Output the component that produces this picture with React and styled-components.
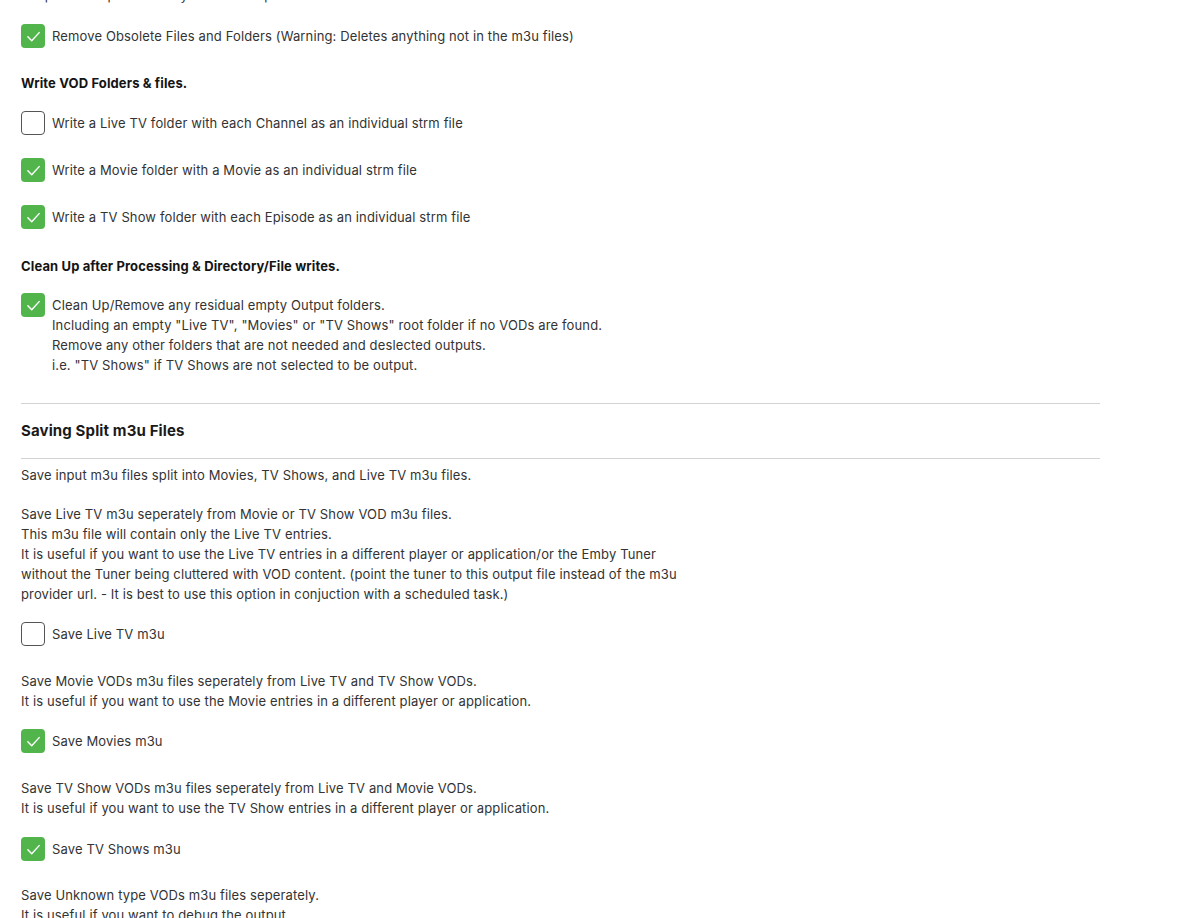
import React from "react";
import styled, { createGlobalStyle } from "styled-components";

const Global = createGlobalStyle`
  html, body {
    margin: 0;
    padding: 0;
    background: #ffffff;
    overflow: hidden;
  }
  body {
    font-family: Inter, "Noto Sans", sans-serif;
    color: #333333;
  }
`;

const Page = styled.div`
  width: 1079px;
  padding-left: 21px;
  margin-top: -15px;
  font-size: 13px;
  line-height: 20px;
  letter-spacing: 0.13px;
`;

const Text = styled.div`
  margin-bottom: ${(p) => p.$mb ?? 19}px;
`;

const Heading = styled.div`
  font-weight: 700;
  color: #141414;
  margin-bottom: ${(p) => p.$mb ?? 18}px;
`;

const Title = styled.h2`
  margin: 0;
  font-size: 15px;
  line-height: 22px;
  font-weight: 700;
  color: #1a1a1a;
`;

const Divider = styled.hr`
  border: none;
  border-top: 1.5px solid #d3d3d3;
  margin: 0;
  margin-top: ${(p) => p.$mt ?? 0}px;
  margin-bottom: ${(p) => p.$mb ?? 0}px;
`;

const Row = styled.label`
  display: flex;
  align-items: flex-start;
  gap: 7px;
  margin-bottom: ${(p) => p.$mb ?? 23}px;
`;

const Box = styled.span`
  flex: none;
  box-sizing: border-box;
  width: 24px;
  height: 24px;
  border-radius: 4px;
  display: flex;
  align-items: center;
  justify-content: center;
  background: ${(p) => (p.$checked ? "#52b54b" : "#ffffff")};
  border: ${(p) => (p.$checked ? "none" : "1.6px solid #555555")};
`;

const Label = styled.span`
  margin-top: 2px;
  color: #333333;
`;

const Check = ({ checked, children, mb }) => (
  <Row $mb={mb}>
    <Box $checked={checked}>
      {checked && (
        <svg width="17" height="17" viewBox="0 0 24 24" fill="none" stroke="#ffffff" strokeWidth="2" strokeLinecap="round" strokeLinejoin="round">
          <polyline points="4 12.5 9.5 18 20 6.5" />
        </svg>
      )}
    </Box>
    <Label>{children}</Label>
  </Row>
);

export default function App() {
  return (
    <>
      <Global />
      <Page>
        <Text $mb={19}>Keeps the output directory clean and up to date with the m3u files.</Text>
        <Check checked mb={25}>
          Remove Obsolete Files and Folders (Warning: Deletes anything not in the m3u files)
        </Check>

        <Heading $mb={18}>Write VOD Folders &amp; files.</Heading>
        <Check>Write a Live TV folder with each Channel as an individual strm file</Check>
        <Check checked>Write a Movie folder with a Movie as an individual strm file</Check>
        <Check checked mb={27}>Write a TV Show folder with each Episode as an individual strm file</Check>

        <Heading $mb={17}>Clean Up after Processing &amp; Directory/File writes.</Heading>
        <Check checked mb={0}>
          Clean Up/Remove any residual empty Output folders.
          <br />
          Including an empty "Live TV", "Movies" or "TV Shows" root folder if no VODs are found.
          <br />
          Remove any other folders that are not needed and deslected outputs.
          <br />
          i.e. "TV Shows" if TV Shows are not selected to be output.
        </Check>

        <Divider $mt={28} $mb={16} />
        <Title>Saving Split m3u Files</Title>
        <Divider $mt={16} $mb={6} />

        <Text>Save input m3u files split into Movies, TV Shows, and Live TV m3u files.</Text>
        <Text $mb={18}>
          Save Live TV m3u seperately from Movie or TV Show VOD m3u files.
          <br />
          This m3u file will contain only the Live TV entries.
          <br />
          It is useful if you want to use the Live TV entries in a different player or application/or the Emby Tuner
          <br />
          without the Tuner being cluttered with VOD content. (point the tuner to this output file instead of the m3u
          <br />
          provider url. - It is best to use this option in conjuction with a scheduled task.)
        </Text>
        <Check mb={25}>Save Live TV m3u</Check>

        <Text $mb={18}>
          Save Movie VODs m3u files seperately from Live TV and TV Show VODs.
          <br />
          It is useful if you want to use the Movie entries in a different player or application.
        </Text>
        <Check checked mb={25}>Save Movies m3u</Check>

        <Text $mb={19}>
          Save TV Show VODs m3u files seperately from Live TV and Movie VODs.
          <br />
          It is useful if you want to use the TV Show entries in a different player or application.
        </Text>
        <Check checked mb={24}>Save TV Shows m3u</Check>

        <Text>
          Save Unknown type VODs m3u files seperately.
          <br />
          It is useful if you want to debug the output.
        </Text>
      </Page>
    </>
  );
}
